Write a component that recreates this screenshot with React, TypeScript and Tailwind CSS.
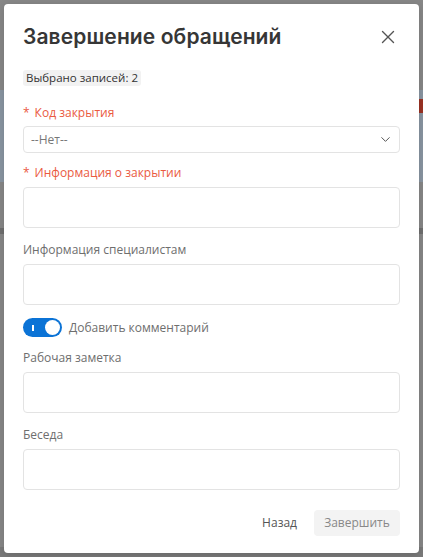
import React, { useState } from 'react'
import { ChevronDown, X } from 'lucide-react'

function FieldLabel({ children, required }: { children: React.ReactNode; required?: boolean }) {
  return (
    <div className={`text-[12px] leading-[17px] ${required ? 'text-[#ea5a3f]' : 'text-[#6e6e6e]'}`}>
      {required && <span className="mr-[5px]">*</span>}
      {children}
    </div>
  )
}

function TextBox() {
  return <div className="h-[41px] rounded-[4px] border border-[#e3e3e3] bg-white" />
}

function Toggle({ on, onChange }: { on: boolean; onChange: () => void }) {
  return (
    <button
      type="button"
      onClick={onChange}
      className={`flex h-[19px] w-[39px] items-center rounded-full px-[2px] ${on ? 'justify-end bg-[#0b73d6]' : 'justify-start bg-[#c9c9c9]'}`}
    >
      {on && <span className="mr-auto ml-[7px] h-[6px] w-[1.5px] bg-white" />}
      <span className="h-[15px] w-[15px] rounded-full bg-white" />
    </button>
  )
}

export default function App() {
  const [comment, setComment] = useState(true)

  return (
    <div className="relative h-[557px] w-[423px] overflow-hidden bg-[#878787] font-['Open_Sans',sans-serif]">
      {/* dimmed page behind the modal */}
      <div className="flex h-full flex-col">
        <div className="h-[90px]" />
        <div className="h-[92px] bg-[#8995a2]">
          <div className="ml-auto mt-[9px] h-[14px] w-[10px] bg-[#9b3224]" />
        </div>
        <div className="h-[46px]" />
        <div className="h-[6px] bg-[#6f6f6f]" />
        <div className="flex-1" />
        <div className="h-[10px] bg-[#7a7a7a]" />
      </div>

      <div className="absolute inset-x-[4px] top-[4px] bottom-[4px] flex flex-col rounded-[4px] bg-white px-[19px] pt-[19px] shadow-[0_2px_8px_rgba(0,0,0,0.15)]">
        <div className="flex items-center justify-between">
          <h1 className="font-['Inter',sans-serif] text-[21px] font-semibold leading-[27px] tracking-[0.1px] text-[#363636]">
            Завершение обращений
          </h1>
          <X className="mr-[1px] h-[22px] w-[22px] text-[#555]" strokeWidth={1.5} />
        </div>

        <div className="mt-[14px]">
          <span className="inline-block rounded-[3px] bg-[#f2f2f2] px-[3px] text-[11.5px] leading-[16px] text-[#333]">
            Выбрано записей: 2
          </span>
        </div>

        <div className="mt-[16px]">
          <FieldLabel required>Код закрытия</FieldLabel>
          <div className="mt-[5px] flex h-[27px] items-center justify-between rounded-[4px] border border-[#e3e3e3] pl-[7px] pr-[6px]">
            <span className="text-[12px] text-[#777]">--Нет--</span>
            <ChevronDown className="h-[15px] w-[15px] text-[#555]" strokeWidth={1.6} />
          </div>
        </div>

        <div className="mt-[11px]">
          <FieldLabel required>Информация о закрытии</FieldLabel>
          <div className="mt-[6px]">
            <TextBox />
          </div>
        </div>

        <div className="mt-[13px]">
          <FieldLabel>Информация специалистам</FieldLabel>
          <div className="mt-[6px]">
            <TextBox />
          </div>
        </div>

        <div className="mt-[13px] flex items-center gap-[7px]">
          <Toggle on={comment} onChange={() => setComment(!comment)} />
          <span className="text-[12px] text-[#6e6e6e]">Добавить комментарий</span>
        </div>

        <div className="mt-[12px]">
          <FieldLabel>Рабочая заметка</FieldLabel>
          <div className="mt-[6px]">
            <TextBox />
          </div>
        </div>

        <div className="mt-[13px]">
          <FieldLabel>Беседа</FieldLabel>
          <div className="mt-[6px]">
            <TextBox />
          </div>
        </div>

        <div className="mt-[20px] flex items-center justify-end gap-[17px]">
          <button type="button" className="text-[12px] text-[#555]">
            Назад
          </button>
          <button type="button" className="h-[26px] w-[86px] rounded-[4px] bg-[#f3f3f3] text-[12px] text-[#888]">
            Завершить
          </button>
        </div>
      </div>
    </div>
  )
}
